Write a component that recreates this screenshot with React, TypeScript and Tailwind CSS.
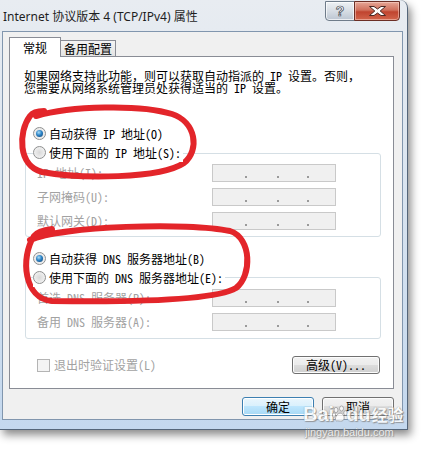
const cn = "[font-family:'Noto_Sans_Mono_CJK_SC','Noto_Sans_CJK_SC',monospace]"

const Radio = ({ checked, label }: { checked?: boolean; label: string }) => (
  <div className="relative z-10 ml-[23px] flex h-[19px] w-fit items-center bg-white pr-[2px]">
    <span className="flex h-[13px] w-[13px] items-center justify-center rounded-full border border-[#8e8f8f] bg-[radial-gradient(circle_at_50%_50%,#d9d9d9_0%,#f9f9f9_100%)]">
      {checked && (
        <span className="h-[7px] w-[7px] rounded-full bg-[radial-gradient(circle_at_40%_35%,#a9dcf7_0%,#2d84c7_45%,#0c3c6b_100%)]" />
      )}
    </span>
    <span className="ml-[3px] text-[12px] leading-[19px] text-black">{label}</span>
  </div>
)

const IpBox = () => (
  <div className="flex h-[18px] w-[124px] items-end border border-[#c9c9c9] bg-[#f0f0f0] pb-[3px] pl-[32px]">
    <span className="h-[2px] w-[2px] bg-[#9a9a9a]" />
    <span className="ml-[30px] h-[2px] w-[2px] bg-[#9a9a9a]" />
    <span className="ml-[28px] h-[2px] w-[2px] bg-[#9a9a9a]" />
  </div>
)

const Field = ({ label }: { label: string }) => (
  <div className="flex h-[18px] items-center pl-[11px]">
    <span className="w-[175px] text-[12px] text-[#a2a2a2]">{label}</span>
    <IpBox />
  </div>
)

const winBtn =
  "flex h-[18px] items-center justify-center rounded-[3px] text-[12px] text-black"

const App = () => {
  return (
    <div className={`relative h-[449px] w-[421px] overflow-hidden bg-white ${cn}`}>
      {/* window */}
      <div className="flex h-[430px] w-[408px] flex-col rounded-tr-[8px] border-r border-b border-[#55667a] bg-[linear-gradient(180deg,#e8ecf1_0%,#dde6f0_35%,#c4d8ee_100%)] pb-[9px] pl-[2px] pr-[4px] shadow-[3px_5px_8px_rgba(0,0,0,0.45)]">
        {/* title bar */}
        <div className="flex h-[31px] items-start">
          <div className="pl-[1px] pt-[8px] text-[12px] leading-[17px] text-[#1e1e1e] [font-family:'Noto_Sans','Noto_Sans_CJK_SC',sans-serif]">
            Internet 协议版本 4 (TCP/IPv4) 属性
          </div>
          <div className="ml-auto mr-[3px] mt-[1px] flex">
            <div className="flex h-[20px] w-[30px] items-center justify-center rounded-bl-[4px] border border-[#6f7c8a] bg-[linear-gradient(180deg,#eef1f4_0%,#d7dde4_50%,#bcc6d2_100%)] shadow-[inset_0_0_0_1px_rgba(255,255,255,0.7)]">
              <span className="text-[14px] font-bold leading-none text-white [-webkit-text-stroke:0.7px_#3b434d] [font-family:'Liberation_Sans',sans-serif]">
                ?
              </span>
            </div>
            <div className="-ml-[1px] flex h-[20px] w-[46px] items-center justify-center rounded-br-[4px] border border-[#6b2e25] bg-[linear-gradient(180deg,#e6a797_0%,#d0705c_45%,#c0442f_55%,#d2654c_100%)] shadow-[inset_0_0_0_1px_rgba(255,220,210,0.5)]">
              <svg width="17" height="10" viewBox="0 0 17 10">
                <polygon
                  points="0.5,0.5 5,0.5 8.5,3 12,0.5 16.5,0.5 11.2,5 16.5,9.5 12,9.5 8.5,7 5,9.5 0.5,9.5 5.8,5"
                  fill="#ffffff"
                  stroke="#4b2a25"
                  strokeWidth="1"
                  strokeLinejoin="round"
                />
              </svg>
            </div>
          </div>
        </div>

        {/* client area */}
        <div className="flex flex-1 flex-col border border-[#8196ae] bg-[#f0f0f0] pl-[6px] pt-[5px]">
          {/* tabs */}
          <div className="flex h-[19px] items-end">
            <div className="relative z-10 -mb-[1px] flex h-[20px] w-[52px] items-center justify-center border border-b-0 border-[#898c95] bg-white text-[12px] text-black">
              常规
            </div>
            <div className="-ml-[1px] flex h-[16px] w-[56px] items-center justify-center border border-b-0 border-[#898c95] bg-[linear-gradient(180deg,#f4f4f4_0%,#e3e3e3_100%)] pt-[1px] text-[12px] text-black">
              备用配置
            </div>
          </div>

          {/* panel */}
          <div className="flex h-[333px] w-[385px] flex-col border border-[#898c95] bg-white">
            <p className="ml-[14px] mt-[13px] text-[12px] leading-[12px] text-black">
              如果网络支持此功能，则可以获取自动指派的 IP 设置。否则，
              <br />
              您需要从网络系统管理员处获得适当的 IP 设置。
            </p>

            <div className="mt-[30px]">
              <Radio checked label="自动获得 IP 地址(O)" />
              <Radio label="使用下面的 IP 地址(S):" />
            </div>
            <div className="-mt-[9px] ml-[15px] flex w-[356px] flex-col gap-[6px] rounded-[3px] border border-[#d5dfe5] pb-[6px] pt-[10px]">
              <Field label="IP 地址(I):" />
              <Field label="子网掩码(U):" />
              <Field label="默认网关(D):" />
            </div>

            <div className="mt-[12px]">
              <Radio checked label="自动获得 DNS 服务器地址(B)" />
              <Radio label="使用下面的 DNS 服务器地址(E):" />
            </div>
            <div className="-mt-[10px] ml-[15px] flex w-[356px] flex-col gap-[6px] rounded-[3px] border border-[#d5dfe5] pb-[7px] pt-[11px]">
              <Field label="首选 DNS 服务器(P):" />
              <Field label="备用 DNS 服务器(A):" />
            </div>

            <div className="mt-[17px] flex items-center pl-[27px] pr-[13px]">
              <span className="h-[13px] w-[13px] border border-[#b4b4b4] bg-[#f4f4f4]" />
              <span className="ml-[4px] text-[12px] text-[#a2a2a2]">退出时验证设置(L)</span>
              <div
                className={`${winBtn} ml-auto w-[88px] border border-[#707070] bg-[linear-gradient(180deg,#f2f2f2_0%,#ebebeb_49%,#dddddd_50%,#cfcfcf_100%)] shadow-[inset_0_0_0_1px_#fcfcfc]`}
              >
                高级(V)...
              </div>
            </div>
          </div>

          {/* dialog buttons */}
          <div className="mt-[8px] flex w-[385px] justify-end gap-[8px]">
            <div
              className={`${winBtn} h-[19px] w-[72px] border border-[#3c7fb1] bg-[linear-gradient(180deg,#eaf6fd_0%,#d9f0fc_49%,#bee6fd_50%,#a7d9f5_100%)] shadow-[inset_0_0_0_1px_#ffffff]`}
            >
              确定
            </div>
            <div
              className={`${winBtn} h-[19px] w-[72px] border border-[#707070] bg-[linear-gradient(180deg,#f2f2f2_0%,#ebebeb_49%,#dddddd_50%,#cfcfcf_100%)] shadow-[inset_0_0_0_1px_#fcfcfc]`}
            >
              取消
            </div>
          </div>
        </div>
      </div>

      {/* red hand-drawn marks */}
      <svg className="pointer-events-none absolute left-0 top-0" width="421" height="449" viewBox="0 0 421 449">
        <path
          d="M 36 116 C 70 106, 140 104, 172 114 C 196 122, 200 150, 184 163 C 160 179, 80 179, 42 172 C 18 166, 18 132, 30 116 C 33 112, 38 111, 44 111"
          fill="none"
          stroke="#e3252a"
          strokeWidth="6"
          strokeLinecap="round"
          strokeLinejoin="round"
        />
        <path
          d="M 30 240 C 60 226, 190 222, 230 231 C 252 238, 252 276, 236 288 C 214 301, 120 302, 52 301 C 24 299, 20 258, 34 236 C 37 232, 44 230, 52 229"
          fill="none"
          stroke="#e3252a"
          strokeWidth="6"
          strokeLinecap="round"
          strokeLinejoin="round"
        />
      </svg>

      {/* watermark */}
      <div className="pointer-events-none absolute left-[303px] top-[404px] opacity-80 [font-family:'Liberation_Sans','Noto_Sans_CJK_SC',sans-serif]">
        <div className="flex items-end text-[20px] font-bold leading-[21px] text-white [text-shadow:0_0_1px_#6f6f6f,1px_1px_1px_#8a8a8a]">
          <span>Bai</span>
          <svg width="16" height="18" viewBox="0 0 16 18" className="-mx-[2px] mb-[2px]">
            <g fill="#ffffff" stroke="#8a8a8a" strokeWidth="0.8">
              <ellipse cx="4" cy="5" rx="2" ry="2.6" />
              <ellipse cx="9.5" cy="3.5" rx="2" ry="2.6" />
              <ellipse cx="13.5" cy="8" rx="1.8" ry="2.3" />
              <ellipse cx="2" cy="10" rx="1.7" ry="2.2" />
              <path d="M 8 8 C 12 8, 14 15, 10 16 C 8 16.5, 6 15.5, 4.5 16 C 2 15, 4 9, 8 8 Z" />
            </g>
          </svg>
          <span>du</span>
          <span className="ml-[1px] text-[16px] leading-[19px]">经验</span>
        </div>
        <div className="ml-[2px] mt-[1px] text-[11px] leading-[12px] text-white [text-shadow:0_0_1px_#6f6f6f,1px_1px_1px_#8a8a8a]">
          jingyan.baidu.com
        </div>
      </div>
    </div>
  )
}

export default App
